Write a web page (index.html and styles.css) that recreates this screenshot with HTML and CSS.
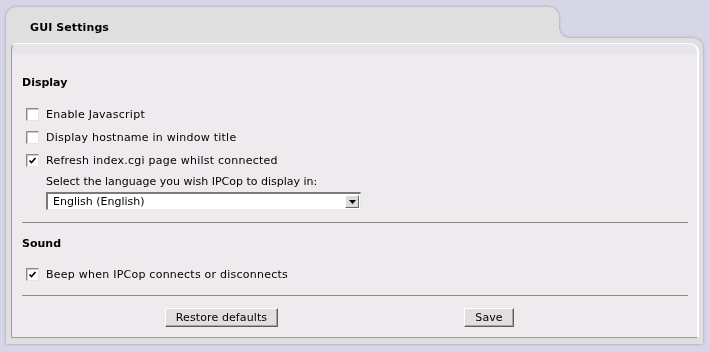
FILE: index.html
```html
<!DOCTYPE html>
<html>
<head>
<meta charset="utf-8">
<link rel="stylesheet" href="styles.css">
</head>
<body>
<div class="frame">
  <div class="tab"><span class="tab-title">GUI Settings</span></div>
  <div class="frame-body">
    <div class="panel">
      <div class="heading">Display</div>
      <div class="gap-heading"></div>
      <div class="row"><span class="cb"></span><span class="label">Enable Javascript</span></div>
      <div class="row"><span class="cb"></span><span class="label">Display hostname in window title</span></div>
      <div class="row"><span class="cb checked"><svg width="9" height="9" viewBox="0 0 9 9"><path d="M1.5 4.5 L3.5 6.5 L7.5 2" fill="none" stroke="#000" stroke-width="1.6"/></svg></span><span class="label">Refresh index.cgi page whilst connected</span></div>
      <div class="lang-label">Select the language you wish IPCop to display in:</div>
      <div class="select">
        <span class="select-text">English (English)</span>
        <span class="select-btn"><svg width="7" height="4" viewBox="0 0 7 4"><path d="M0 0 H7 L3.5 4 Z" fill="#000"/></svg></span>
      </div>
      <div class="sep sep1"></div>
      <div class="heading">Sound</div>
      <div class="gap-heading2"></div>
      <div class="row"><span class="cb checked"><svg width="9" height="9" viewBox="0 0 9 9"><path d="M1.5 4.5 L3.5 6.5 L7.5 2" fill="none" stroke="#000" stroke-width="1.6"/></svg></span><span class="label">Beep when IPCop connects or disconnects</span></div>
      <div class="sep sep2"></div>
      <div class="buttons">
        <span class="btn btn-restore">Restore defaults</span>
        <span class="btn btn-save">Save</span>
      </div>
    </div>
  </div>
</div>
</body>
</html>
```
FILE: styles.css
```css
html, body {
  margin: 0;
  padding: 0;
}
body {
  background: #d6d6e6;
  font-family: "DejaVu Sans", Verdana, sans-serif;
  font-size: 11px;
  line-height: 13px;
  color: #000;
  height: 352px;
  overflow: hidden;
}
.frame {
  margin: 7px 0 0 6px;
  width: 697px;
  filter: drop-shadow(0 0 1.5px rgba(110, 110, 150, 0.6));
}
.tab {
  position: relative;
  width: 553px;
  height: 31px;
  background: #dfdfdf;
  border-radius: 10px 10px 0 0;
  box-sizing: border-box;
  padding: 14px 0 0 24px;
}
.tab::after {
  content: "";
  position: absolute;
  left: 553px;
  bottom: 0;
  width: 10px;
  height: 10px;
  background: radial-gradient(circle at 100% 0, rgba(223,223,223,0) 9.5px, #dfdfdf 10px);
}
.tab-title {
  font-weight: bold;
  letter-spacing: 0.1px;
}
.frame-body {
  background: #dfdfdf;
  border-radius: 0 10px 0 0;
  padding: 5px 4px 6px 5px;
}
.panel {
  background: linear-gradient(#e7e5ea 0, #e7e5ea 9px, #eeeaee 11px);
  border-top: 1px solid #fff;
  border-left: 1px solid #9c9c9c;
  border-right: 2px solid #fff;
  border-bottom: 1px solid #9c9c9c;
  border-radius: 6px 9px 0 0;
  padding: 32px 9px 10px 10px;
}
.heading {
  font-weight: bold;
  height: 13px;
  padding-top: 1px;
  margin-top: -1px;
}
.gap-heading {
  height: 14px;
}
.gap-heading2 {
  height: 13px;
}
.row {
  display: flex;
  align-items: center;
  height: 23px;
}
.label {
  letter-spacing: 0.24px;
}
.cb {
  width: 13px;
  height: 13px;
  box-sizing: border-box;
  margin-left: 4px;
  margin-right: 7px;
  background: #fff;
  border-top: 1px solid #8a8a8a;
  border-left: 1px solid #8a8a8a;
  border-right: 1px solid #e4e4e4;
  border-bottom: 1px solid #e4e4e4;
  box-shadow: inset 1px 1px 0 #c8c8c8;
  display: flex;
  align-items: center;
  justify-content: center;
}
.cb svg {
  display: block;
}
.lang-label {
  height: 20px;
  line-height: 20px;
  padding-left: 24px;
}
.select {
  margin-left: 24px;
  width: 315px;
  height: 18px;
  box-sizing: border-box;
  background: #fff;
  border-top: 2px solid #7a7a7a;
  border-left: 2px solid #7a7a7a;
  border-right: 1px solid #e8e8e8;
  border-bottom: 1px solid #e8e8e8;
  display: flex;
  align-items: center;
  justify-content: space-between;
}
.select-text {
  padding-left: 5px;
}
.select-btn {
  width: 14px;
  height: 13px;
  box-sizing: border-box;
  margin-right: 1px;
  background: #dcdcdc;
  border-top: 1px solid #fff;
  border-left: 1px solid #fff;
  border-right: 1px solid #6a6a6a;
  border-bottom: 1px solid #6a6a6a;
  display: flex;
  align-items: center;
  justify-content: center;
}
.select-btn svg {
  display: block;
}
.sep {
  height: 1px;
  background: #8a8a8a;
}
.sep1 {
  margin-top: 12px;
  margin-bottom: 14px;
}
.sep2 {
  margin-top: 9px;
  margin-bottom: 12px;
}
.buttons {
  display: flex;
  height: 19px;
}
.btn {
  height: 19px;
  box-sizing: border-box;
  background: #e1dde1;
  border-top: 1px solid #fff;
  border-left: 1px solid #fff;
  border-right: 1px solid #5e5e5e;
  border-bottom: 1px solid #5e5e5e;
  box-shadow: inset -1px -1px 0 #a4a4a4;
  display: flex;
  align-items: center;
  justify-content: center;
  padding-bottom: 1px;
  letter-spacing: 0.1px;
}
.btn-restore {
  width: 113px;
  margin-left: 143px;
}
.btn-save {
  width: 50px;
  margin-left: 186px;
}
```
